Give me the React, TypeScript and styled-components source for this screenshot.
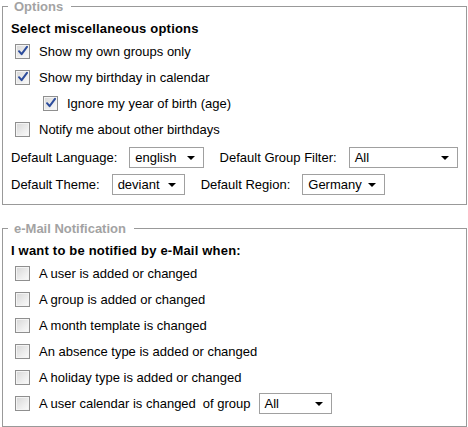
import * as React from "react";
import styled, { createGlobalStyle } from "styled-components";

const GlobalStyle = createGlobalStyle`
  html, body {
    margin: 0;
    padding: 0;
    background: #ffffff;
  }
  body {
    font-family: "Liberation Sans", Arial, sans-serif;
    font-size: 13px;
    color: #000000;
  }
`;

const Page = styled.div`
  width: 465px;
  padding: 0 1px 0 2px;
`;

const Group = styled.fieldset<{ $gap?: number; $bottom: number }>`
  margin: ${p => p.$gap || 0}px 0 0 0;
  padding: 0 8px ${p => p.$bottom}px 8px;
  border: 1px solid #999999;
  min-width: 0;
`;

const Legend = styled.legend`
  margin-left: -3px;
  padding: 0 8px 0 6px;
  font-weight: bold;
  font-size: 13px;
  line-height: 13px;
  color: #a3a3a3;
`;

const Heading = styled.div`
  margin-top: 8px;
  margin-bottom: 1px;
  font-weight: bold;
  line-height: 16px;
  letter-spacing: 0.2px;
`;

const Row = styled.label<{ $indent?: boolean }>`
  display: flex;
  align-items: center;
  height: 26px;
  padding-left: ${p => (p.$indent ? 32 : 4)}px;
  cursor: default;
`;

const Box = styled.span`
  position: relative;
  flex: none;
  width: 13px;
  height: 13px;
  margin-right: 9px;
  border: 1px solid #8f8f8f;
  background: linear-gradient(135deg, #d6d6d6 0%, #ececec 55%, #fbfbfb 100%);
  box-shadow: inset 0 0 0 1px #f4f4f4;

  svg {
    position: absolute;
    left: 1px;
    top: 0px;
  }
`;

const Tail = styled.span`
  margin-left: 7px;
  margin-right: 8px;
`;

const Fields = styled.div<{ $lead?: number }>`
  display: flex;
  align-items: center;
  height: 27px;
  margin-top: ${p => p.$lead || 0}px;
`;

const Label = styled.span`
  margin-right: 12px;
  white-space: nowrap;
`;

const Select = styled.div<{ $width: number; $after?: number }>`
  display: flex;
  align-items: center;
  justify-content: space-between;
  box-sizing: border-box;
  width: ${p => p.$width}px;
  height: 21px;
  margin-right: ${p => p.$after || 0}px;
  padding: 0 8px 0 5px;
  border: 1px solid #a0a0a0;
  background: #ffffff;
  line-height: 19px;
  white-space: nowrap;
`;

const Arrow = styled.span`
  width: 0;
  height: 0;
  border-left: 4px solid transparent;
  border-right: 4px solid transparent;
  border-top: 4px solid #000000;
  margin-top: 1px;
`;

const Check = () => (
  <svg width="12" height="12" viewBox="0 0 12 12">
    <path d="M2 6.2 L4.6 9.2 L10 1.8" fill="none" stroke="#2c4c9c" strokeWidth="2" strokeLinecap="round" strokeLinejoin="round" />
  </svg>
);

const Option: React.FC<{ checked?: boolean; indent?: boolean; children?: React.ReactNode }> = ({ checked, indent, children }) => (
  <Row $indent={indent}>
    <Box>{checked && <Check />}</Box>
    {children}
  </Row>
);

const Dropdown: React.FC<{ value: string; width: number; after?: number }> = ({ value, width, after }) => (
  <Select $width={width} $after={after}>
    <span>{value}</span>
    <Arrow />
  </Select>
);

const notifications = [
  "A user is added or changed",
  "A group is added or changed",
  "A month template is changed",
  "An absence type is added or changed",
  "A holiday type is added or changed",
];

export default function App() {
  return (
    <Page>
      <GlobalStyle />
      <Group $bottom={6}>
        <Legend>Options</Legend>
        <Heading>Select miscellaneous options</Heading>
        <Option checked>Show my own groups only</Option>
        <Option checked>Show my birthday in calendar</Option>
        <Option checked indent>Ignore my year of birth (age)</Option>
        <Option>Notify me about other birthdays</Option>
        <Fields $lead={2}>
          <Label>Default Language:</Label>
          <Dropdown value="english" width={76} after={16} />
          <Label>Default Group Filter:</Label>
          <Dropdown value="All" width={112} />
        </Fields>
        <Fields>
          <Label>Default Theme:</Label>
          <Dropdown value="deviant" width={73} after={16} />
          <Label>Default Region:</Label>
          <Dropdown value="Germany" width={83} />
        </Fields>
      </Group>
      <Group $gap={17} $bottom={10}>
        <Legend>e-Mail Notification</Legend>
        <Heading>I want to be notified by e-Mail when:</Heading>
        {notifications.map(text => (
          <Option key={text}>{text}</Option>
        ))}
        <Option>
          A user calendar is changed
          <Tail>of group</Tail>
          <Dropdown value="All" width={73} />
        </Option>
      </Group>
    </Page>
  );
}
